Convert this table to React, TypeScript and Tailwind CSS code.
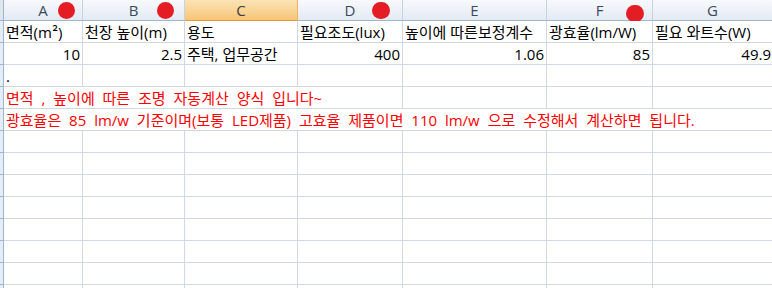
import React from "react";

const widths = [79, 102, 113, 105, 144, 106, 120];
const letters = ["A", "B", "C", "D", "E", "F", "G"];
const font = { fontFamily: '"Open Sans", "Noto Sans CJK KR", "Noto Sans", sans-serif' };

function Cell({ children, right, last }: { children?: React.ReactNode; right?: boolean; last?: boolean }) {
  return (
    <div
      className={
        "h-[22px] border-b border-[#d0d7e5] flex items-center overflow-visible whitespace-nowrap px-[2px] text-[15px] leading-[20px] text-black " +
        (last ? "" : "border-r ") +
        (right ? "justify-end" : "justify-start")
      }
    >
      {children}
    </div>
  );
}

export default function App() {
  const cols = "4px 79px 102px 113px 105px 144px 106px 120px";
  const emptyRows = 10;
  return (
    <div className="w-[772px] h-[288px] overflow-hidden bg-white relative" style={font}>
      {/* header */}
      <div className="grid h-[21px] relative overflow-hidden" style={{ gridTemplateColumns: cols }}>
        <div className="h-[21px] bg-[#dfe6f0] border-r border-b border-[#9eb6ce]" />
        {letters.map((l) => (
          <div
            key={l}
            className={
              "h-[21px] border-b flex items-center justify-center text-[15px] leading-none " +
              (l === "C"
                ? "bg-gradient-to-b from-[#fbe3b5] to-[#f6c676] border-[#f29436] border-r border-r-[#f2b35c] text-[#3b3b3b]"
                : "bg-gradient-to-b from-[#f7f9fc] to-[#e4eaf3] border-[#9eb6ce] border-r border-r-[#c5d2e0] text-[#3a4a5e]")
            }
          >
            {l}
          </div>
        ))}
        <span className="absolute left-[58px] top-[2px] w-[17px] h-[17px] rounded-full bg-[#e41c23]" />
        <span className="absolute left-[157px] top-[2px] w-[17px] h-[17px] rounded-full bg-[#e41c23]" />
        <span className="absolute left-[372px] top-[2px] w-[18px] h-[17px] rounded-full bg-[#e41c23]" />
        <span className="absolute left-[626px] top-[5px] w-[18px] h-[17px] rounded-full bg-[#e41c23]" />
      </div>

      {/* body */}
      <div className="grid" style={{ gridTemplateColumns: cols }}>
        {/* row 1 */}
        <div className="h-[22px] bg-[#e4ecf7] border-r border-b border-[#9eb6ce]" />
        <Cell>
          면적(m<span style={{ fontFamily: '"Noto Sans CJK KR", sans-serif' }}>²</span>)
        </Cell>
        <Cell>천장 높이(m)</Cell>
        <Cell>용도</Cell>
        <Cell>필요조도(lux)</Cell>
        <Cell>높이에 따른보정계수</Cell>
        <Cell>광효율(lm/W)</Cell>
        <Cell last>필요 와트수(W)</Cell>

        {/* row 2 */}
        <div className="h-[22px] bg-[#e4ecf7] border-r border-b border-[#9eb6ce]" />
        <Cell right>10</Cell>
        <Cell right>2.5</Cell>
        <Cell>주택, 업무공간</Cell>
        <Cell right>400</Cell>
        <Cell right>1.06</Cell>
        <Cell right>85</Cell>
        <Cell right last>49.9</Cell>

        {/* row 3 */}
        <div className="h-[22px] bg-[#e4ecf7] border-r border-b border-[#9eb6ce]" />
        <Cell>.</Cell>
        <Cell />
        <Cell />
        <Cell />
        <Cell />
        <Cell />
        <Cell last />

        {/* row 4 */}
        <div className="h-[22px] bg-[#e4ecf7] border-r border-b border-[#9eb6ce]" />
        <div className="col-span-4 h-[22px] border-b border-r border-[#d0d7e5] flex items-center whitespace-nowrap px-[2px] text-[15px] leading-[20px] text-[#ff0000] [word-spacing:4px]">
          면적 , 높이에 따른 조명 자동계산 양식 입니다~
        </div>
        <Cell />
        <Cell />
        <Cell last />

        {/* row 5 */}
        <div className="h-[22px] bg-[#e4ecf7] border-r border-b border-[#9eb6ce]" />
        <div className="col-span-7 h-[22px] border-b border-[#d0d7e5] flex items-center whitespace-nowrap px-[2px] text-[15px] leading-[20px] text-[#ff0000] [word-spacing:4px]">
          광효율은 85 lm/w 기준이며(보통 LED제품) 고효율 제품이면 110 lm/w 으로 수정해서 계산하면 됩니다.
        </div>

        {Array.from({ length: emptyRows }).map((_, r) => (
          <React.Fragment key={r}>
            <div className="h-[22px] bg-[#e4ecf7] border-r border-b border-[#9eb6ce]" />
            {widths.map((_, c) => (
              <Cell key={c} last={c === widths.length - 1} />
            ))}
          </React.Fragment>
        ))}
      </div>
    </div>
  );
}
